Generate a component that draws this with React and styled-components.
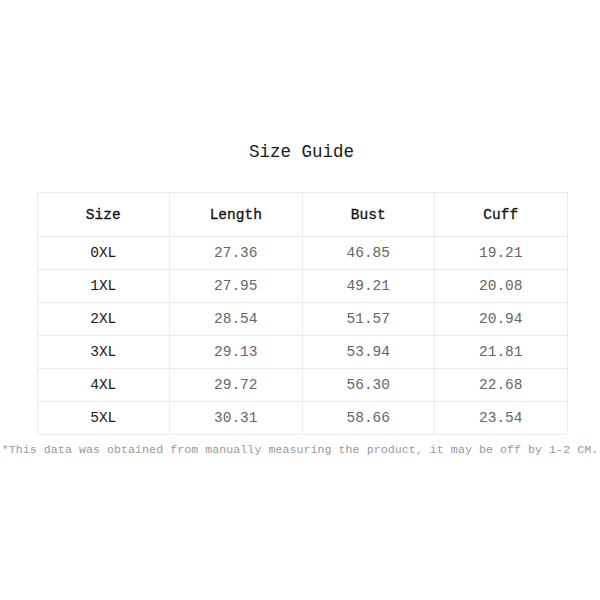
import React from 'react'
import styled, { createGlobalStyle } from 'styled-components'

const GlobalStyle = createGlobalStyle`
  html, body {
    margin: 0;
    padding: 0;
    background: #fff;
  }
  body {
    font-family: 'Liberation Mono', 'DejaVu Sans Mono', monospace;
  }
`

const Page = styled.div`
  width: 600px;
  height: 600px;
  display: flex;
  flex-direction: column;
  align-items: center;
  padding-top: 142px;
  box-sizing: border-box;
`

const Title = styled.h1`
  margin: 0 0 30px 3px;
  font-size: 17.5px;
  line-height: 20px;
  font-weight: normal;
  color: #1a1a1a;
`

const Table = styled.table`
  width: 531px;
  margin-left: 4px;
  border-collapse: collapse;
  table-layout: fixed;
`

const Cell = styled.td`
  height: ${(props) => (props.head ? 43 : 32)}px;
  padding: 0;
  border: 1px solid #ececec;
  text-align: center;
  font-size: 14.5px;
  color: ${(props) => (props.head ? '#111' : props.dark ? '#1a1a1a' : '#666')};
  font-weight: normal;
  -webkit-text-stroke: ${(props) => (props.head ? '0.3px #111' : '0')};
`

const Note = styled.p`
  margin: 7px 0 0;
  font-size: 11.6px;
  letter-spacing: 0.06px;
  line-height: 16px;
  color: #999;
  white-space: nowrap;
`

const columns = ['Size', 'Length', 'Bust', 'Cuff']

const rows = [
  ['0XL', '27.36', '46.85', '19.21'],
  ['1XL', '27.95', '49.21', '20.08'],
  ['2XL', '28.54', '51.57', '20.94'],
  ['3XL', '29.13', '53.94', '21.81'],
  ['4XL', '29.72', '56.30', '22.68'],
  ['5XL', '30.31', '58.66', '23.54'],
]

export default function App() {
  return (
    <>
      <GlobalStyle />
      <Page>
        <Title>Size Guide</Title>
        <Table>
          <thead>
            <tr>
              {columns.map((c) => (
                <Cell as="th" head key={c}>
                  {c}
                </Cell>
              ))}
            </tr>
          </thead>
          <tbody>
            {rows.map((r) => (
              <tr key={r[0]}>
                {r.map((v, i) => (
                  <Cell key={i} dark={i === 0}>
                    {v}
                  </Cell>
                ))}
              </tr>
            ))}
          </tbody>
        </Table>
        <Note>
          *This data was obtained from manually measuring the product, it may be off by 1-2 CM.
        </Note>
      </Page>
    </>
  )
}
